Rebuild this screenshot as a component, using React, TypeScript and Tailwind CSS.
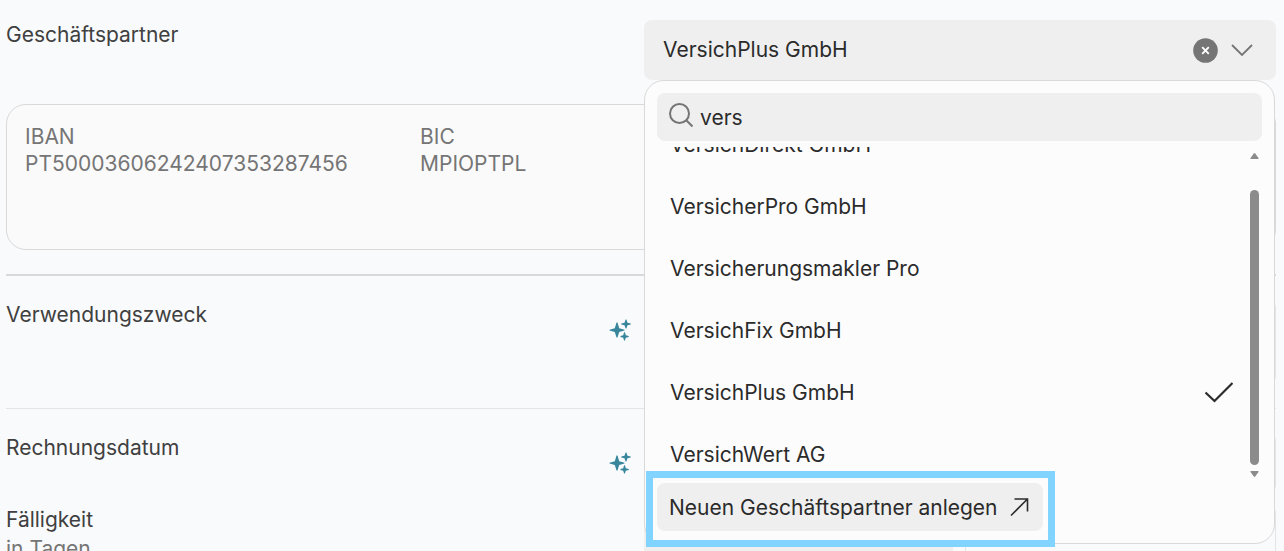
import clsx from 'clsx';
import { ReactNode } from 'react';

const results = [
  'VersichDirekt GmbH',
  'VersicherPro GmbH',
  'Versicherungsmakler Pro',
  'VersichFix GmbH',
  'VersichPlus GmbH',
  'VersichWert AG',
];

const selected = 'VersichPlus GmbH';

function Sparkles() {
  return (
    <svg className="h-6 w-6 text-[#37869c]" viewBox="0 0 24 24" fill="currentColor" aria-hidden="true">
      <path d="M8.500 4.500h1L11.200 10.300 16.500 11.700v.8L11.200 14 9.500 19.500h-1L6.800 14 1.500 12.500v-.8L6.800 10.300z" />
      <path d="M17.600 1.500h.8L19.500 4.700 22.700 5.600v.8L19.500 7.300 18.400 10.500h-.8L16.500 7.300 13.300 6.400v-.8L16.500 4.700z" />
      <path d="M16.100 14.300h.8L17.800 17.300 20.700 18.100v.8L17.800 19.700 16.900 22.500h-.8L15.200 19.700 12.500 18.900v-.8L15.200 17.300z" />
    </svg>
  );
}

function Row({ label, htmlFor, ai, children }: { label: ReactNode; htmlFor: string; ai?: boolean; children: ReactNode }) {
  return (
    <div className="grid grid-cols-2 gap-x-1.5">
      <div className="flex items-start justify-between pr-1.5">
        <label htmlFor={htmlFor} className="pt-px">{label}</label>
        {ai && <div className="mt-[18px]"><Sparkles /></div>}
      </div>
      {children}
    </div>
  );
}

function PartnerDropdown() {
  return (
    <div className="absolute top-full left-0 right-px z-10 rounded-[20px] border border-[#d9d9d9] bg-[#fcfcfc] p-3 text-[#2b2b2b]">
      <label className="flex h-12 items-center gap-[7px] rounded-lg bg-[#efefef] px-3">
        <svg className="mb-1 h-6 w-6 shrink-0 text-[#757575]" viewBox="0 0 24 24" fill="none" stroke="currentColor" strokeWidth="2" aria-hidden="true">
          <circle cx="10.500" cy="10.500" r="9.500" />
          <path d="M17 17 23.500 23.500" />
        </svg>
        <input type="text" aria-label="Suche" defaultValue="vers" className="w-full bg-transparent outline-none" />
      </label>

      <div className="mt-1.5 flex h-[336px]">
        <ul role="listbox" className="flex h-full flex-1 flex-col justify-end overflow-hidden pr-1">
          {results.map((name) => (
            <li key={name} role="option" aria-selected={name === selected} className="flex h-[62px] shrink-0 items-center justify-between px-[13px] pt-1">
              {name}
              {name === selected && (
                <svg className="h-6 w-7" viewBox="0 0 28 24" fill="none" stroke="currentColor" strokeWidth="2.200" aria-hidden="true">
                  <path d="M0.500 12.500 9.500 21 27.500 3" />
                </svg>
              )}
            </li>
          ))}
        </ul>
        {/* Scrollbar */}
        <div className="mr-[3px] flex w-[9px] flex-col items-center text-[#8b8b8b]">
          <svg className="mt-1.5 h-1.5 w-[9px]" viewBox="0 0 9 6" fill="currentColor"><path d="M3.800.5Q4.500-.3 5.200.5L8.500 5Q9 6 8 6H1Q0 6 .5 5z" /></svg>
          <div className="mt-[31px] w-full flex-1 rounded-full bg-[#8b8b8b]" />
          <svg className="mt-1.5 mb-1.5 h-1.5 w-[9px]" viewBox="0 0 9 6" fill="currentColor"><path d="M3.800 5.500Q4.500 6.300 5.200 5.500L8.500 1Q9 0 8 0H1Q0 0 .5 1z" /></svg>
        </div>
      </div>

      <button type="button" className="relative flex h-12 items-center gap-3 rounded-lg bg-[#efefef] pr-[13px] pl-3">
        Neuen Geschäftspartner anlegen
        <svg className="h-5 w-5" viewBox="0 0 20 20" fill="none" stroke="currentColor" strokeWidth="1.600" aria-hidden="true">
          <path d="M1 18.500 17.500 2M4.500 2h13v12.500" />
        </svg>
        <span className="absolute -top-3 -right-3 -bottom-4 -left-[11px] border-[7px] border-[#80d4ff]" />
      </button>
    </div>
  );
}

function Field({ id, className }: { id: string; className?: string }) {
  return <input id={id} type="text" className={clsx('h-[60px] w-full min-w-0 rounded-lg', className)} />;
}

export default function App() {
  return (
    <main className="h-screen overflow-hidden bg-[#f9fafc] pt-5 pr-2 pl-1.5 font-['Inter',sans-serif] text-[21px] leading-[27px] text-[#404040]">
      <Row label="Geschäftspartner" htmlFor="partner">
        <div className="relative">
          <div className="flex h-[60px] items-center rounded-lg bg-[#efefef] pr-[22px] pl-[19px] text-[#2b2b2b]">
            <button id="partner" type="button" aria-expanded="true" className="flex-1 pb-0.5 text-left">{selected}</button>
            <button type="button" aria-label="Auswahl löschen" className="mr-3">
              <svg className="h-[25px] w-[25px]" viewBox="0 0 25 25">
                <circle cx="12.500" cy="12.500" r="12.300" fill="#757575" />
                <path d="M9.200 9.200l6.600 6.600m0-6.600-6.600 6.600" stroke="#fff" strokeWidth="1.900" />
              </svg>
            </button>
            <svg className="h-6 w-6 text-[#757575]" viewBox="0 0 24 24" fill="none" stroke="currentColor" strokeWidth="1.800" aria-hidden="true">
              <path d="M2 7l10 10L22 7" />
            </svg>
          </div>
          <PartnerDropdown />
        </div>
      </Row>

      {/* Bank details */}
      <dl className="mt-6 flex h-[146px] rounded-[20px] border border-[#d9d9d9] bg-[#fafafa] px-[18px] pt-[18px] text-[#757575]">
        <div className="w-[395px]">
          <dt>IBAN</dt>
          <dd>PT50003606242407353287456</dd>
        </div>
        <div>
          <dt>BIC</dt>
          <dd>MPIOPTPL</dd>
        </div>
      </dl>

      <div className="mt-6 border-t-2 border-[#d9d9d9] pt-6 pb-6">
        <Row label="Verwendungszweck" htmlFor="purpose" ai>
          <textarea id="purpose" className="h-[84px] w-full resize-none rounded-lg border border-[#e4e4e6]" />
        </Row>
      </div>

      <div className="border-t border-[#e4e4e6] pt-6">
        <Row label="Rechnungsdatum" htmlFor="date" ai>
          <Field id="date" className="border border-[#e4e4e6]" />
        </Row>
      </div>

      <div className="mt-3">
        <Row label={<>Fälligkeit<span className="mt-0.5 block text-[#757575]">in Tagen</span></>} htmlFor="due">
          <div className="flex gap-3">
            <Field id="due" className="bg-[#efefef]" />
            <Field id="due-date" className="border border-[#e4e4e6]" />
          </div>
        </Row>
      </div>
    </main>
  );
}
